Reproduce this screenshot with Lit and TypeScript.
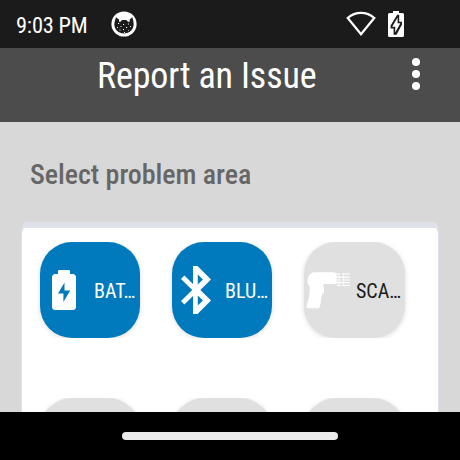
import { LitElement, html, svg, css, nothing } from "lit";
import { customElement, property } from "lit/decorators.js";
import { classMap } from "lit/directives/class-map.js";

const batteryIcon = svg`<svg class="battery" width="24" height="40" viewBox="0 0 24 40">
  <path fill="#fff" fill-rule="evenodd" d="M6 1.2Q6 0 7.2 0H16.8Q18 0 18 1.2V4H20.5Q24 4 24 7.5V36.5Q24 40 20.5 40H3.5Q0 40 0 36.5V7.5Q0 4 3.5 4H6ZM12.5 12.5L6 23.5H11.4V32L18.2 20.5H12.5Z"/>
</svg>`;

const bluetoothIcon = svg`<svg class="bluetooth" width="30" height="48" viewBox="0 0 30 48">
  <path fill="#fff" fill-rule="evenodd" d="M12 0H16.5L30 13.5L19.4 24L30 34.5L16.5 48H12V30L3.4 38.5L0 35.1L11.2 24L0 12.9L3.4 9.5L12 18ZM16.8 8.6V18.4L21.9 13.5ZM16.8 29.6V39.4L21.9 34.5Z"/>
</svg>`;

const scannerIcon = svg`<svg class="scanner" width="44" height="37" viewBox="0 0 44 37">
  <path fill="#fff" d="M9 .3H28L30.5 1.5V12H17.6C16.6 18 15.8 24 14.6 31C14 35 13.4 36.3 11.5 36.3H2.5C.5 36.3 0 35 .8 33C3.5 26 3.8 20 3.6 13.8C1.8 12.5 1.2 10.7 1.8 7.5C2.5 3 5 .3 9 .3Z"/>
  <path fill="#fff" d="M16.4 15H18V19.5L17.3 21.7H15.8Z"/>
  <path stroke="#fff" stroke-width="1.2" d="M28 2H34M36 2H44M28 5.2H44M30 8H35M36 8H44M28 10.7H44M31 13.5H35M36 13.5H44"/>
  <path stroke="#fff" stroke-width=".6" d="M33 1V14M37.5 1V14"/>
</svg>`;

@customElement("status-bar")
class StatusBar extends LitElement {
  static styles = css`
    :host { display: flex; height: 48px; background: #1b1b1b; color: #fff; align-items: center; box-sizing: border-box; padding: 0 56px 0 16px; }
    .time { font-size: 22.4px; letter-spacing: -.2px; line-height: 48px; width: 95px; white-space: nowrap; padding-top: 2px; box-sizing: border-box; }
    .gap { flex: 1; }
    .wifi { margin-right: 12px; }
    svg { display: block; flex: none; }
  `;
  render() {
    return html`
      <div class="time">9:03 PM</div>
      <svg width="26" height="26" viewBox="0 0 26 26">
        <circle cx="13" cy="13" r="12.6" fill="#fff"/>
        <path fill="#1b1b1b" d="M5 6.2L8 8.5V10.8H9.5L11 9H15.5L17 10.8H18.7V8.5L21.3 6.2L22.2 9.3L22.7 13C22.7 18.5 18.5 22.5 13 22.5C7.5 22.5 3.3 18.5 3.3 13L4 9.3Z"/>
        <path fill="#fff" d="M7 12h1.2v.9H7zM12 13h1.1v1H12zM17 12.5h.9v1h-.9zM9.5 15h.9v.9h-.9zM15 16h1.1v.9H15zM19 15h.9v1h-.9zM6 16h.9v.9H6zM12 18h1v.9H12zM8.5 18.5h.9v.9h-.9zM17 19h.8v.8h-.8zM13 21h.9v.9h-.9z"/>
      </svg>
      <div class="gap"></div>
      <svg class="wifi" width="30" height="26" viewBox="0 0 30 26">
        <path fill="none" stroke="#fff" stroke-width="2.3" d="M1.7 7C9.5 .2 20.5 .2 28.3 7L15 23.2Z"/>
      </svg>
      <svg width="16" height="26" viewBox="0 0 16 26">
        <path fill="#fff" d="M5 0H11V2H14.5Q16 2 16 3.5V24.5Q16 26 14.5 26H1.5Q0 26 0 24.5V3.5Q0 2 1.5 2H5Z"/>
        <path fill="#1b1b1b" d="M9.2 3.8H11.2V10.8H14V13.5L8.5 23.8H5.6V17.5H2.6V14.5Z"/>
        <path fill="#fff" d="M9.6 6.5V12.3H12.4L7.2 21.5V15.8H4.2Z"/>
      </svg>`;
  }
}

@customElement("app-header")
class AppHeader extends LitElement {
  static styles = css`
    :host { display: grid; grid-template-columns: 97px 1fr 8px 40px; height: 74px; background: #4c4c4c; color: #fff; }
    .title { grid-column: 2; font-size: 36px; letter-spacing: -.15px; line-height: 42px; padding-top: 7px; white-space: nowrap; }
    .more { display: flex; flex-direction: column; gap: 4px; padding-top: 10px; }
    .dot { width: 8px; height: 8px; border-radius: 50%; background: #fff; }
  `;
  render() {
    return html`<div class="title">Report an Issue</div>
      <div class="more"><i class="dot"></i><i class="dot"></i><i class="dot"></i></div>`;
  }
}

@customElement("problem-tile")
class ProblemTile extends LitElement {
  static styles = css`
    :host { display: block; overflow: hidden; height: 96px; padding: 0 6px; margin: 0 -6px; }
    .tile { display: flex; align-items: center; box-sizing: border-box; height: 96px; border-radius: 32px; background: #e0e0e0; color: #1b1b1b; box-shadow: 0 1px 5px rgba(0,0,0,.14); }
    .selected { background: #007abc; color: #fff; }
    .icon { display: flex; width: 52px; flex: none; }
    .selected .icon { width: 53px; }
    .selected .icon-battery { width: 54px; }
    .label { font-size: 20px; line-height: 24px; padding-top: 2px; white-space: nowrap; }
    .battery { margin-left: 12px; }
    .bluetooth { margin-left: 9px; }
    .scanner { margin-left: 2px; }
    svg { display: block; }
  `;
  @property() kind = "";
  @property() label = "";
  @property({ type: Boolean }) selected = false;
  render() {
    const icon = this.kind === "battery" ? batteryIcon : this.kind === "bluetooth" ? bluetoothIcon : this.kind === "scanner" ? scannerIcon : nothing;
    return html`<div class=${classMap({ tile: true, selected: this.selected })}>
      <div class=${classMap({ icon: true, "icon-battery": this.kind === "battery" })}>${icon}</div><div class="label">${this.label}</div>
    </div>`;
  }
}

@customElement("app-root")
class AppRoot extends LitElement {
  static styles = css`
    :host { display: flex; flex-direction: column; width: 460px; height: 460px; overflow: hidden; background: #d8d8d8; font-family: "Roboto Condensed", Roboto, sans-serif; font-stretch: 75%; }
    main { flex: 1; min-height: 0; overflow: hidden; padding: 0 21px; }
    h1 { margin: 0; padding: 36px 0 0 9px; height: 64px; font-size: 28px; letter-spacing: -.05px; line-height: 34px; font-weight: 500; color: #666; white-space: nowrap; }
    .card { box-sizing: border-box; height: 300px; background: #fff; border: 1px solid #dfe1ea; border-top-width: 6px; border-radius: 4px 4px 0 0 / 14px 14px 0 0; padding: 14px 18px; }
    .grid { display: grid; grid-template-columns: 100px 100px 101px; column-gap: 32px; row-gap: 60px; }
    nav { height: 48px; flex: none; background: #000; display: grid; place-items: center; }
    .handle { width: 216px; height: 8px; border-radius: 4px; background: #ebebeb; }
  `;
  render() {
    return html`<status-bar></status-bar><app-header></app-header>
      <main>
        <h1>Select problem area</h1>
        <section class="card"><div class="grid">
          <problem-tile kind="battery" label="BAT…" selected></problem-tile>
          <problem-tile kind="bluetooth" label="BLU…" selected></problem-tile>
          <problem-tile kind="scanner" label="SCA…"></problem-tile>
          <problem-tile></problem-tile><problem-tile></problem-tile><problem-tile></problem-tile>
        </div></section>
      </main>
      <nav><div class="handle"></div></nav>`;
  }
}
